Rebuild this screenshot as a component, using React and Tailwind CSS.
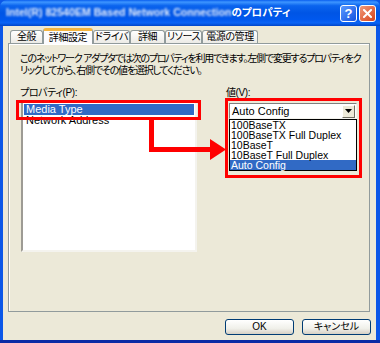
const tabs = [
  { label: '全般', w: 'w-[33px]' },
  { label: '詳細設定', w: 'w-[50px]', active: true },
  { label: 'ドライバ', w: 'w-[37px]' },
  { label: '詳細', w: 'w-[35px]' },
  { label: 'リソース', w: 'w-[37px]' },
  { label: '電源の管理', w: 'w-[56px]' },
]

const speeds = ['100BaseTX', '100BaseTX Full Duplex', '10BaseT', '10BaseT Full Duplex', 'Auto Config']

function Tab({ label, w, active }) {
  if (active) {
    return (
      <div
        className={`${w} relative z-10 -mb-px h-[16px] rounded-t-[3px] border-x border-[#919B9C] border-t-[3px] border-t-[#F5B53F] bg-[#FCFCFE] flex items-center justify-center whitespace-nowrap text-[10px] tracking-[-0.4px] leading-none`}
      >
        {label}
      </div>
    )
  }
  return (
    <div
      className={`${w} h-[13px] rounded-t-[3px] border border-b-0 border-[#919B9C] bg-[linear-gradient(180deg,#FFFFFF,#ECEBE6)] flex items-center justify-center whitespace-nowrap text-[10px] tracking-[-0.4px] leading-none`}
    >
      {label}
    </div>
  )
}

function XpButton({ children }) {
  return (
    <div className="w-[69px] h-[16px] rounded-[3px] border border-[#003C74] bg-[linear-gradient(180deg,#FFFFFF,#F0F0EA_60%,#D6D0C5)] flex items-center justify-center text-[10px] leading-none">
      {children}
    </div>
  )
}

export default function App() {
  return (
    <div className="relative w-[380px] h-[343px] overflow-hidden flex flex-col bg-[#0B57E8] text-black font-['Liberation_Sans','Noto_Sans_CJK_JP',sans-serif] [font-feature-settings:'palt']">
      {/* title bar */}
      <div className="h-[26px] shrink-0 rounded-t-[7px] bg-[linear-gradient(180deg,#0A5FEF_0%,#3D95FF_8%,#0B64EE_22%,#0055E5_50%,#0058EE_75%,#0A64F5_88%,#0045C8_100%)] flex items-center pl-[6px] pr-[4px]">
        <span className="text-white font-bold text-[10.6px] whitespace-nowrap">
          <span className="blur-[0.8px] opacity-90">Intel(R) 82540EM Based Network Connection</span>
          <span className="text-[10.5px]">のプロパティ</span>
        </span>
        <div className="ml-auto flex gap-[2px]">
          <div className="w-[17px] h-[17px] rounded-[3px] border border-white bg-[linear-gradient(135deg,#5B9BFF,#1451E0)] flex items-center justify-center text-white font-bold text-[13px] leading-none">
            ?
          </div>
          <div className="w-[17px] h-[17px] rounded-[3px] border border-white bg-[linear-gradient(135deg,#F09A7A,#D8431B)] flex items-center justify-center">
            <svg width="9" height="9" viewBox="0 0 9 9">
              <path d="M1 1 L8 8 M8 1 L1 8" stroke="#fff" strokeWidth="2" strokeLinecap="square" />
            </svg>
          </div>
        </div>
      </div>

      {/* body */}
      <div className="flex-1 ml-[3px] mr-[4px] bg-[#ECE9D8] pl-[5px] pr-[6px] pt-[2px] flex flex-col">
        <div className="flex items-end pl-[2px] h-[15px]">
          {tabs.map((t) => (
            <Tab key={t.label} {...t} />
          ))}
        </div>

        {/* tab panel */}
        <div className="h-[269px] border border-[#919B9C] shadow-[inset_1px_1px_0_#FFFFFF] pl-[11px] pt-[9px]">
          <p className="text-[10px] tracking-[-1.2px] leading-[12px] whitespace-nowrap">
            このネットワーク アダプタでは次のプロパティを利用できます。左側で変更するプロパティをク
            <br />
            リックしてから、右側でその値を選択してください。
          </p>

          <div className="flex mt-[10px]">
            <div className="w-[177px]">
              <div className="text-[10px] tracking-[-0.4px] leading-[12px]">プロパティ(P):</div>
              <div className="ml-px mt-px w-[176px] h-[152px] border-2 border-t-[#9D9B94] border-l-[#9D9B94] border-b-[#F4F3EE] border-r-[#F4F3EE] bg-white pt-[2px] px-px">
                <div className="h-[11px] bg-[#316AC5] text-white text-[11px] leading-[11px] pl-[2px]">Media Type</div>
                <div className="h-[11px] text-[11px] leading-[11px] pl-[2px]">Network Address</div>
              </div>
            </div>

            <div className="ml-[29px]">
              <div className="text-[10px] tracking-[-0.4px] leading-[12px]">値(V):</div>
              <div className="relative ml-[3px] mt-[4px] w-[128px] h-[16px] border border-t-[#7F7F7F] border-l-[#7F7F7F] border-b-[#F4F3EE] border-r-[#F4F3EE] bg-white flex items-center">
                <span className="flex-1 pl-[2px] text-[11px] leading-none">Auto Config</span>
                <div className="w-[13px] h-[13px] mr-px bg-[#ECE9D8] border border-t-white border-l-white border-b-[#716F64] border-r-[#716F64] flex items-center justify-center">
                  <svg width="7" height="4" viewBox="0 0 7 4">
                    <path d="M0 0 H7 L3.5 4 Z" fill="#000" />
                  </svg>
                </div>
                <div className="absolute left-[-1px] top-[15px] w-[128px] border border-black bg-white">
                  {speeds.map((s) => (
                    <div
                      key={s}
                      className={`h-[10px] text-[10.5px] leading-[10px] pl-px whitespace-nowrap ${
                        s === 'Auto Config' ? 'bg-[#316AC5] text-white' : ''
                      }`}
                    >
                      {s}
                    </div>
                  ))}
                </div>
              </div>
            </div>
          </div>
        </div>

        <div className="flex justify-end gap-[8px] mt-[7px] -mr-px">
          <XpButton>OK</XpButton>
          <XpButton>キャンセル</XpButton>
        </div>
      </div>
      <div className="h-[3px] shrink-0 bg-[#0A2BA5]" />

      {/* red annotation overlay */}
      <svg className="absolute inset-0 pointer-events-none" width="380" height="343" viewBox="0 0 380 343">
        <rect x="17.5" y="101.5" width="182" height="17" fill="none" stroke="#FF0000" strokeWidth="3" />
        <rect x="226.5" y="99.5" width="134" height="77" fill="none" stroke="#FF0000" strokeWidth="3" />
        <polygon
          points="149,120 154,120 154,147 210,147 210,139 226,149.5 210,160 210,152 149,152"
          fill="#FF0000"
        />
      </svg>
    </div>
  )
}
